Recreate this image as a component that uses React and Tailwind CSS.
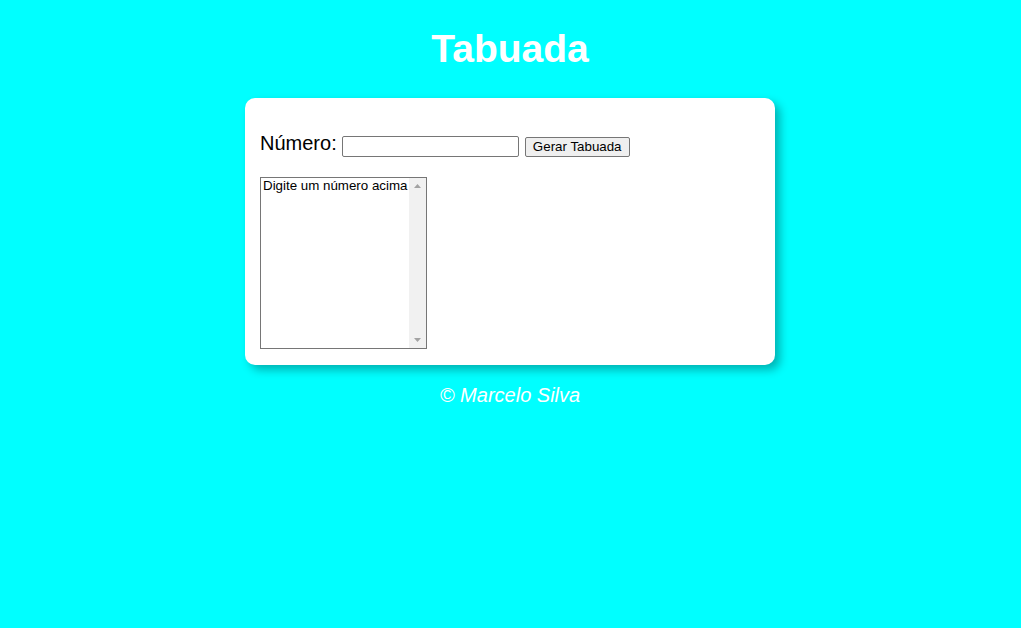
export default function App() {
  return (
    <div className="min-h-[628px] w-full bg-[#00ffff] flex flex-col items-center pr-[1px]" style={{ fontFamily: '"Liberation Sans", Arial, sans-serif' }}>
      <h1 className="mt-[26px] text-[39px] leading-[45px] font-bold text-white">Tabuada</h1>
      <div className="mt-[27px] w-[530px] h-[267px] bg-white rounded-[10px] shadow-[5px_5px_10px_rgba(0,0,0,0.3)] p-[15px]">
        <div className="mt-[19px] flex items-start text-black">
          <span className="text-[20px] leading-[23px]">Número:</span>
          <input type="text" className="ml-[5px] mt-[4px] w-[177px] h-[21px] border border-[#767676] rounded-[2px] bg-white px-[2px] text-[13.33px]" />
          <button className="ml-[6px] mt-[5px] w-[105px] h-[20px] border border-[#767676] rounded-[2px] bg-[#efefef] text-[13.33px] leading-[16px] text-black">Gerar Tabuada</button>
        </div>
        <div className="mt-[20px] w-[167px] h-[172px] border border-[#767676] flex bg-white">
          <div className="flex-1 pl-[2px] pt-[0px] text-[13.33px] leading-[16px] text-black whitespace-nowrap overflow-hidden">Digite um número acima</div>
          <div className="w-[17px] h-full bg-[#f1f1f1] flex flex-col items-center justify-between py-[5px]">
            <svg width="9" height="6" viewBox="0 0 9 6"><polygon points="4.5,1 8,5 1,5" fill="#a3a3a3" /></svg>
            <svg width="9" height="6" viewBox="0 0 9 6"><polygon points="1,1 8,1 4.5,5" fill="#a3a3a3" /></svg>
          </div>
        </div>
      </div>
      <p className="mt-[19px] text-[20px] leading-[23px] italic text-white">© Marcelo Silva</p>
    </div>
  );
}
